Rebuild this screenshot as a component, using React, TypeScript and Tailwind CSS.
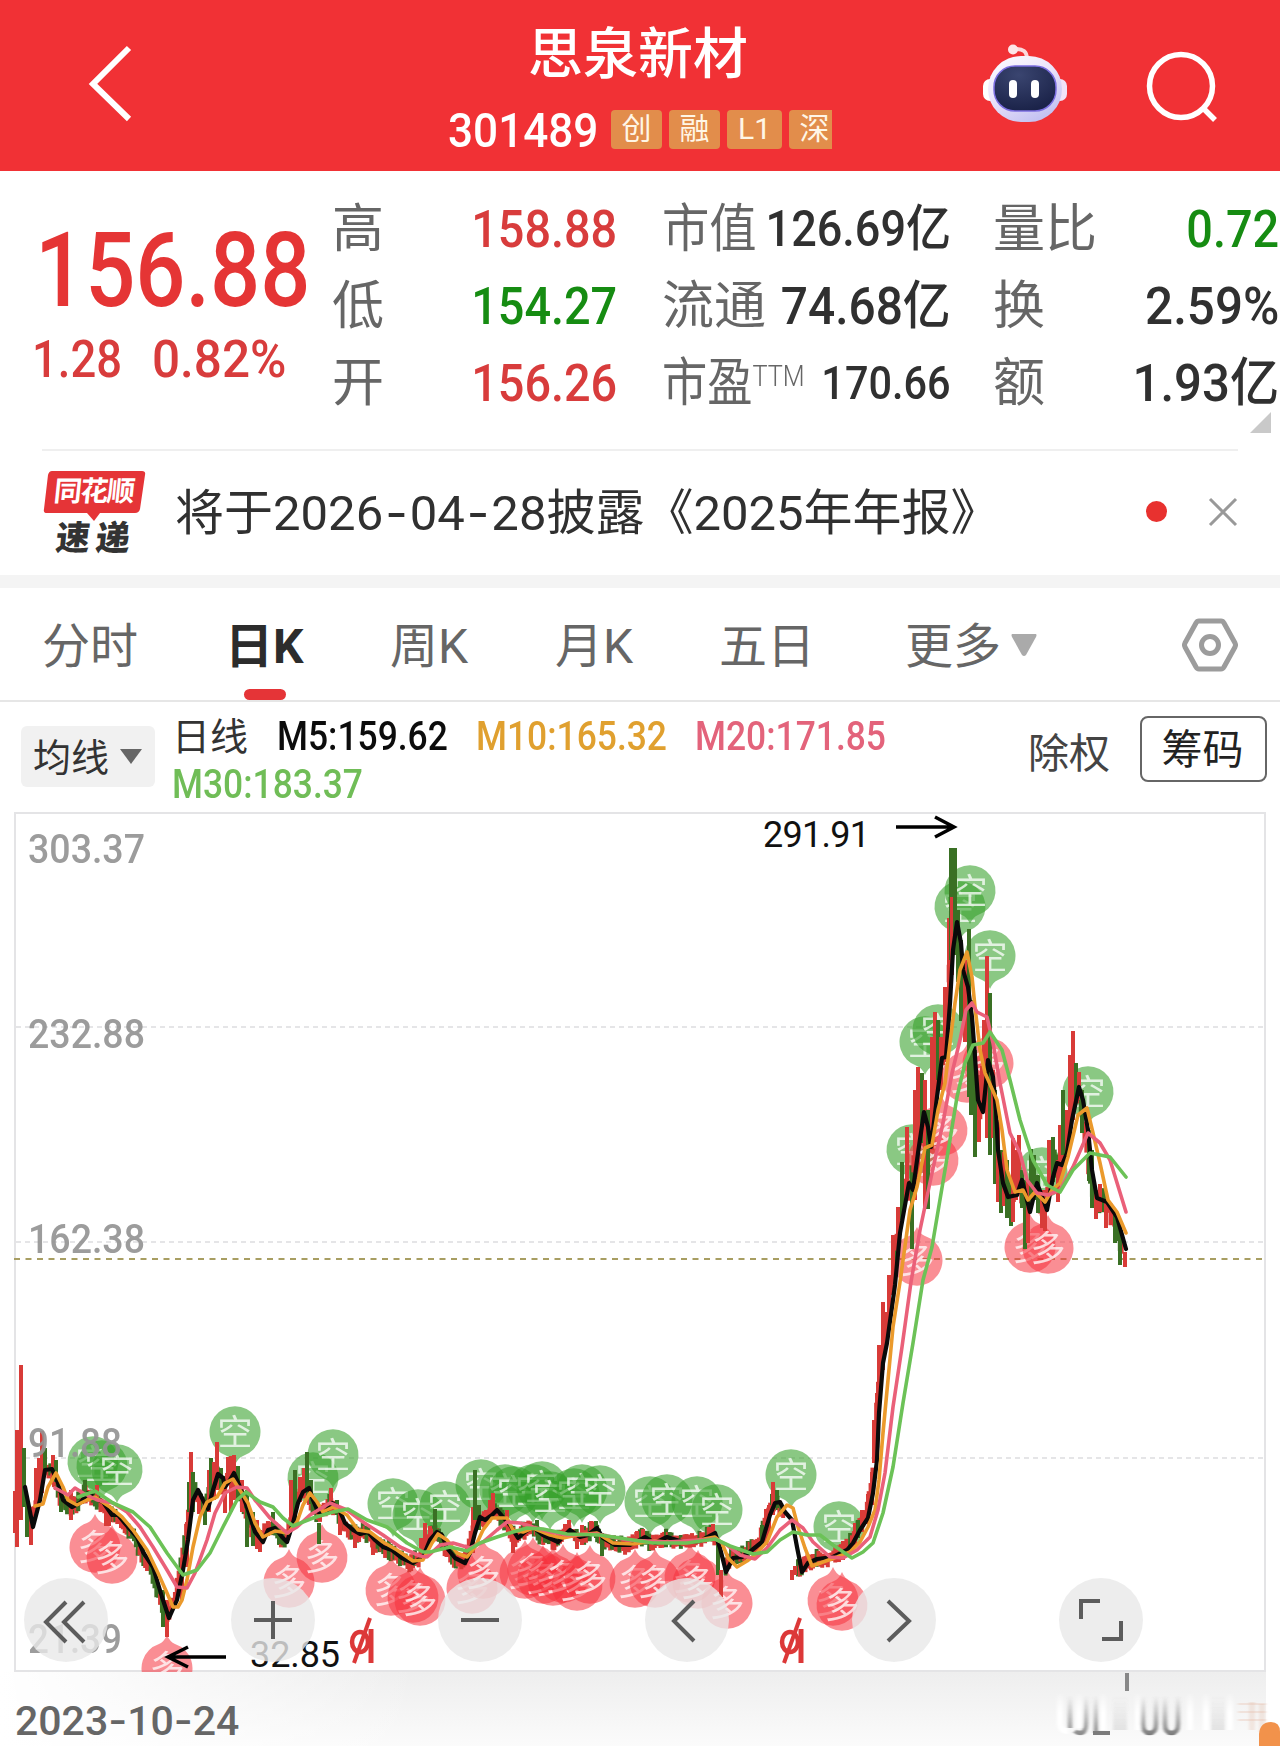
import React from 'react';
import { clsx } from 'clsx';

type Point = [number, number];
type Candle = [x: number, top: number, bottom: number, color: 'r' | 'g'];

const RED = '#d83b38';
const GREEN = '#3a7024';

const M5: Point[] = [
  [25, 1487], [33, 1527], [40, 1500], [45, 1470], [52, 1469], [58, 1483], [63, 1500], [72, 1507], [80, 1503], [88, 1493],
  [95, 1498], [103, 1502], [112, 1515], [118, 1515], [128, 1527], [137, 1537], [143, 1552], [153, 1567], [162, 1597],
  [169, 1618], [177, 1600], [183, 1570], [188, 1540], [193, 1500], [198, 1490], [203, 1500], [208, 1509], [213, 1490],
  [218, 1474], [223, 1478], [225, 1487], [230, 1480], [234, 1473], [240, 1487], [248, 1510], [255, 1532], [263, 1542],
  [268, 1530], [275, 1528], [282, 1537], [287, 1542], [293, 1523], [298, 1503], [303, 1492], [309, 1488], [313, 1500],
  [318, 1512], [325, 1513], [332, 1503], [338, 1507], [345, 1523], [353, 1530], [360, 1534], [368, 1532], [375, 1540],
  [383, 1547], [392, 1550], [402, 1558], [413, 1563], [423, 1557], [430, 1540], [437, 1532], [442, 1535], [447, 1548],
  [455, 1558], [465, 1563], [470, 1553], [475, 1533], [480, 1517], [485, 1520], [492, 1515], [497, 1510], [503, 1517],
  [510, 1525], [518, 1538], [525, 1532], [533, 1527], [543, 1535], [558, 1542], [570, 1530], [580, 1537], [588, 1535],
  [597, 1528], [603, 1538], [615, 1545], [630, 1545], [645, 1537], [655, 1543], [667, 1537], [683, 1542], [700, 1541],
  [715, 1533], [720, 1548], [726, 1572], [733, 1558], [742, 1557], [752, 1550], [762, 1542], [770, 1515], [775, 1503],
  [780, 1502], [785, 1512], [792, 1520], [797, 1547], [802, 1572], [808, 1563], [817, 1559], [833, 1557], [847, 1550],
  [853, 1543], [860, 1530], [868, 1518], [873, 1493], [877, 1460], [879, 1413], [883, 1363], [887, 1343], [892, 1307],
  [895, 1285], [900, 1233], [909, 1183], [913, 1190], [918, 1153], [924, 1112], [928, 1127], [931, 1147], [937, 1097],
  [942, 1058], [946, 1057], [950, 1003], [953, 950], [957, 922], [961, 943], [963, 970], [968, 987], [972, 1017],
  [975, 1057], [978, 1100], [983, 1112], [986, 1083], [988, 1060], [993, 1077], [996, 1110], [998, 1150], [1003, 1183],
  [1008, 1197], [1017, 1195], [1022, 1180], [1030, 1212], [1037, 1183], [1047, 1210], [1053, 1177], [1057, 1163],
  [1062, 1165], [1067, 1153], [1072, 1120], [1079, 1087], [1083, 1100], [1088, 1130], [1092, 1170], [1097, 1198],
  [1107, 1202], [1117, 1217], [1126, 1249],
];

const M10: Point[] = [
  [35, 1506], [43, 1504], [48, 1487], [56, 1473], [63, 1487], [68, 1500], [77, 1505], [87, 1500], [95, 1497], [110, 1507],
  [122, 1517], [133, 1530], [147, 1550], [158, 1573], [167, 1593], [173, 1607], [178, 1607], [182, 1600], [187, 1580],
  [193, 1547], [200, 1517], [207, 1502], [217, 1497], [225, 1483], [233, 1479], [238, 1487], [248, 1503], [255, 1523],
  [263, 1537], [275, 1531], [288, 1533], [297, 1522], [303, 1505], [310, 1493], [317, 1502], [323, 1512], [333, 1507],
  [347, 1515], [358, 1530], [370, 1532], [383, 1542], [397, 1550], [413, 1561], [423, 1560], [432, 1543], [438, 1534],
  [447, 1540], [457, 1553], [467, 1557], [475, 1547], [483, 1530], [492, 1518], [507, 1518], [513, 1530], [523, 1532],
  [533, 1528], [550, 1535], [563, 1538], [577, 1535], [597, 1533], [613, 1543], [633, 1544], [653, 1541], [683, 1543],
  [715, 1537], [722, 1543], [728, 1558], [737, 1567], [747, 1561], [755, 1555], [767, 1542], [777, 1517], [787, 1505],
  [793, 1508], [798, 1527], [805, 1548], [812, 1566], [823, 1562], [837, 1557], [850, 1552], [860, 1542], [868, 1527],
  [875, 1510], [879, 1480], [883, 1433], [888, 1380], [893, 1327], [900, 1282], [910, 1210], [917, 1187], [925, 1148],
  [932, 1145], [938, 1110], [945, 1083], [950, 1043], [955, 1003], [960, 970], [967, 952], [972, 977], [975, 1007],
  [980, 1050], [985, 1073], [997, 1100], [1002, 1130], [1007, 1170], [1015, 1192], [1023, 1190], [1028, 1200],
  [1035, 1192], [1045, 1202], [1052, 1190], [1060, 1183], [1068, 1157], [1078, 1115], [1087, 1108], [1093, 1133],
  [1100, 1163], [1108, 1200], [1117, 1212], [1126, 1233],
];

const M20: Point[] = [
  [55, 1488], [68, 1495], [75, 1488], [83, 1493], [97, 1500], [113, 1503], [127, 1512], [140, 1527], [153, 1547],
  [167, 1570], [177, 1587], [187, 1588], [195, 1573], [207, 1540], [215, 1513], [225, 1493], [237, 1487], [247, 1488],
  [255, 1500], [270, 1518], [287, 1533], [297, 1527], [310, 1515], [330, 1503], [347, 1510], [363, 1522], [383, 1535],
  [400, 1547], [420, 1556], [427, 1557], [440, 1545], [453, 1543], [470, 1548], [483, 1542], [497, 1530], [507, 1522],
  [520, 1523], [533, 1527], [550, 1532], [567, 1535], [597, 1534], [627, 1540], [667, 1542], [715, 1539], [727, 1545],
  [740, 1555], [755, 1559], [767, 1548], [780, 1530], [792, 1520], [803, 1528], [813, 1542], [830, 1557], [843, 1558],
  [857, 1550], [870, 1537], [878, 1510], [885, 1473], [893, 1407], [902, 1347], [911, 1282], [920, 1230], [932, 1173],
  [943, 1123], [952, 1073], [960, 1040], [966, 1010], [972, 1003], [977, 1012], [987, 1017], [993, 1043], [1000, 1083],
  [1010, 1133], [1020, 1153], [1027, 1180], [1037, 1193], [1048, 1195], [1060, 1190], [1073, 1167], [1088, 1133],
  [1100, 1143], [1110, 1160], [1126, 1212],
];

const M30: Point[] = [
  [78, 1497], [95, 1491], [113, 1503], [133, 1512], [150, 1527], [167, 1553], [183, 1575], [197, 1570], [210, 1553],
  [223, 1527], [237, 1500], [246, 1492], [260, 1502], [273, 1507], [283, 1518], [293, 1526], [313, 1518], [333, 1512],
  [348, 1509], [367, 1520], [387, 1527], [407, 1543], [423, 1552], [430, 1552], [450, 1547], [467, 1551], [480, 1543],
  [497, 1537], [513, 1532], [527, 1528], [543, 1529], [567, 1534], [600, 1535], [633, 1540], [653, 1543], [687, 1543],
  [715, 1539], [730, 1546], [753, 1554], [767, 1552], [780, 1540], [793, 1532], [807, 1535], [820, 1535], [833, 1545],
  [852, 1558], [863, 1552], [873, 1543], [883, 1513], [893, 1467], [903, 1403], [913, 1343], [923, 1280], [932, 1247],
  [945, 1170], [957, 1097], [965, 1063], [973, 1045], [983, 1043], [990, 1032], [1002, 1050], [1010, 1080], [1020, 1120],
  [1033, 1160], [1047, 1185], [1060, 1192], [1073, 1170], [1090, 1153], [1110, 1157], [1126, 1177],
];

// sessions with a range far outside their neighbours
const swings: Candle[] = [
  [15, 1491, 1533, 'r'], [17, 1430, 1547, 'r'], [21, 1365, 1520, 'r'], [24, 1448, 1507, 'g'], [27, 1500, 1537, 'g'],
  [31, 1507, 1545, 'r'], [36, 1468, 1507, 'r'], [39, 1458, 1500, 'r'], [42, 1431, 1493, 'r'], [45, 1448, 1472, 'g'],
  [53, 1455, 1478, 'r'], [56, 1460, 1482, 'g'], [61, 1490, 1512, 'g'], [71, 1490, 1520, 'r'], [85, 1480, 1502, 'g'],
  [97, 1485, 1500, 'r'], [106, 1505, 1526, 'r'], [109, 1505, 1526, 'r'], [163, 1590, 1627, 'g'], [167, 1600, 1637, 'r'],
  [182, 1558, 1600, 'r'], [187, 1522, 1567, 'r'], [189, 1482, 1512, 'g'], [191, 1452, 1512, 'r'], [193, 1472, 1512, 'g'],
  [199, 1492, 1514, 'r'], [205, 1500, 1525, 'g'], [209, 1470, 1512, 'r'], [211, 1458, 1500, 'g'], [214, 1462, 1500, 'r'],
  [217, 1442, 1490, 'r'], [221, 1468, 1490, 'g'], [225, 1480, 1513, 'r'], [228, 1457, 1482, 'r'], [231, 1456, 1512, 'r'],
  [234, 1455, 1500, 'r'], [238, 1466, 1500, 'g'], [242, 1480, 1512, 'r'], [247, 1490, 1547, 'g'], [253, 1512, 1546, 'g'],
  [257, 1520, 1549, 'r'], [260, 1530, 1552, 'r'], [273, 1512, 1535, 'g'], [279, 1525, 1544, 'g'], [291, 1480, 1530, 'r'],
  [295, 1470, 1523, 'g'], [300, 1477, 1502, 'r'], [304, 1468, 1497, 'r'], [307, 1452, 1490, 'g'], [311, 1480, 1504, 'g'],
  [319, 1523, 1544, 'g'], [331, 1488, 1512, 'r'], [337, 1500, 1515, 'g'], [340, 1510, 1535, 'r'], [355, 1530, 1548, 'r'],
  [373, 1540, 1555, 'r'], [421, 1538, 1556, 'r'], [425, 1523, 1550, 'r'], [430, 1526, 1545, 'r'], [435, 1509, 1533, 'g'],
  [473, 1507, 1553, 'r'], [475, 1470, 1520, 'g'], [479, 1505, 1530, 'g'], [486, 1510, 1525, 'r'], [490, 1500, 1520, 'r'],
  [493, 1493, 1517, 'r'], [507, 1510, 1525, 'r'], [513, 1527, 1553, 'r'], [537, 1520, 1535, 'g'], [565, 1524, 1536, 'r'],
  [569, 1520, 1535, 'r'], [577, 1532, 1549, 'r'], [582, 1525, 1545, 'r'], [591, 1521, 1535, 'r'], [596, 1521, 1538, 'g'],
  [602, 1533, 1556, 'g'], [637, 1531, 1545, 'r'], [643, 1529, 1540, 'r'], [709, 1527, 1540, 'r'], [713, 1524, 1541, 'r'],
  [718, 1542, 1575, 'g'], [721, 1570, 1597, 'r'], [762, 1525, 1548, 'g'], [766, 1509, 1545, 'r'], [769, 1505, 1535, 'r'],
  [773, 1482, 1515, 'r'], [777, 1490, 1508, 'g'], [792, 1570, 1580, 'r'], [795, 1566, 1575, 'r'], [843, 1541, 1560, 'r'],
  [855, 1523, 1545, 'r'], [858, 1520, 1538, 'g'], [862, 1510, 1532, 'r'], [868, 1494, 1524, 'r'], [872, 1472, 1505, 'r'],
  [874, 1420, 1463, 'r'], [877, 1393, 1445, 'r'], [879, 1345, 1415, 'r'], [883, 1302, 1370, 'r'], [886, 1312, 1345, 'r'],
  [889, 1275, 1325, 'r'], [893, 1235, 1295, 'r'], [898, 1207, 1255, 'r'], [902, 1162, 1220, 'g'], [907, 1127, 1190, 'r'],
  [912, 1173, 1249, 'g'], [915, 1090, 1200, 'r'], [918, 1067, 1177, 'r'], [922, 1073, 1143, 'g'], [925, 1080, 1207, 'r'],
  [928, 1110, 1209, 'g'], [932, 1037, 1150, 'r'], [935, 1012, 1110, 'r'], [938, 1020, 1080, 'g'], [941, 1037, 1090, 'r'],
  [945, 987, 1062, 'r'], [949, 918, 1020, 'r'], [951, 848, 960, 'g'], [952, 897, 975, 'r'], [955, 848, 955, 'g'],
  [958, 910, 982, 'g'], [961, 940, 1021, 'g'], [965, 960, 1042, 'r'], [968, 960, 1022, 'r'], [969, 929, 1097, 'g'],
  [971, 1000, 1115, 'g'], [975, 1050, 1157, 'g'], [979, 1075, 1142, 'r'], [982, 1066, 1110, 'r'], [984, 1020, 1090, 'r'],
  [987, 956, 1138, 'r'], [990, 993, 1155, 'g'], [993, 1070, 1138, 'r'], [995, 1090, 1184, 'g'], [998, 1120, 1202, 'r'],
  [1001, 1150, 1213, 'g'], [1004, 1152, 1206, 'r'], [1007, 1160, 1218, 'g'], [1011, 1180, 1226, 'g'],
  [1013, 1138, 1222, 'r'], [1016, 1150, 1200, 'r'], [1019, 1135, 1192, 'r'], [1022, 1170, 1208, 'g'],
  [1025, 1180, 1249, 'g'], [1028, 1180, 1243, 'r'], [1031, 1149, 1205, 'g'], [1034, 1155, 1200, 'g'],
  [1038, 1175, 1213, 'g'], [1042, 1190, 1228, 'r'], [1045, 1190, 1231, 'r'], [1049, 1140, 1195, 'r'],
  [1053, 1137, 1182, 'g'], [1058, 1160, 1202, 'r'], [1060, 1125, 1180, 'r'], [1063, 1090, 1155, 'g'],
  [1067, 1110, 1160, 'r'], [1070, 1055, 1140, 'r'], [1073, 1031, 1120, 'r'], [1076, 1063, 1102, 'g'],
  [1079, 1072, 1100, 'r'], [1082, 1090, 1133, 'g'], [1089, 1130, 1181, 'g'], [1092, 1150, 1208, 'g'],
  [1096, 1190, 1219, 'r'], [1100, 1184, 1212, 'r'], [1106, 1200, 1228, 'r'], [1111, 1205, 1225, 'r'],
  [1115, 1210, 1243, 'g'], [1120, 1225, 1265, 'g'], [1125, 1252, 1267, 'r'],
];

const shortSignals: Point[] = [
  [93, 1462], [102, 1466], [117, 1470], [235, 1432], [313, 1478], [333, 1455], [393, 1504], [418, 1515], [445, 1507],
  [481, 1485], [505, 1490], [514, 1492], [533, 1490], [542, 1487], [550, 1497], [574, 1494], [582, 1490], [600, 1491],
  [650, 1502], [667, 1500], [697, 1502], [717, 1510], [791, 1475], [839, 1527], [960, 907], [970, 891], [990, 956],
  [925, 1042], [938, 1030], [912, 1150], [1088, 1092], [1042, 1173],
];

const longSignals: Point[] = [
  [95, 1547], [112, 1558], [167, 1668], [289, 1582], [322, 1557], [391, 1590], [413, 1597], [420, 1600], [472, 1588],
  [483, 1573], [525, 1573], [533, 1570], [543, 1578], [553, 1580], [563, 1577], [577, 1585], [590, 1578], [635, 1582],
  [655, 1582], [690, 1577], [698, 1583], [727, 1603], [833, 1600], [842, 1605], [917, 1260], [933, 1160], [942, 1130],
  [967, 1077], [988, 1063], [1030, 1247], [1048, 1248],
];

function valueAt(line: Point[], x: number) {
  const i = line.findIndex(([px]) => px >= x);
  if (i === -1) return line[line.length - 1][1];
  if (i === 0) return line[0][1];
  const [x0, y0] = line[i - 1];
  const [x1, y1] = line[i];
  return y0 + ((y1 - y0) * (x - x0)) / (x1 - x0);
}

// the ordinary sessions hug the 5 day average, which trails them by a few pixels
const sessions: Candle[] = [];
for (let i = 0; i < 590; i++) {
  const x = 28 + i * 1.86;
  if (x > 1122) break;
  if (x > 716 && x < 724) continue;
  if (x > 784 && x < 798) continue;
  const y = valueAt(M5, x + 3);
  const noise = Math.abs(Math.sin(i * 12.9898) * 43758.5453) % 1;
  const other = Math.abs(Math.sin(i * 78.233) * 12543.123) % 1;
  const reach = x > 895 ? 12 : 7;
  const rising = valueAt(M5, x + 5) < valueAt(M5, x);
  sessions.push([x, y - 3 - noise * reach, y + 3 + other * reach, (rising ? noise < 0.8 : noise < 0.5) ? 'r' : 'g']);
}

const toPath = (line: Point[]) => 'M' + line.map((p) => p.join(' ')).join('L');

function Candles({ items }: { items: Candle[] }) {
  return (
    <>
      {items.map(([x, top, bottom, color], i) => (
        <rect key={i} x={x - 2} y={top} width={4} height={bottom - top} fill={color === 'r' ? RED : GREEN} />
      ))}
    </>
  );
}

function Signal({ at: [x, y], long }: { at: Point; long?: boolean }) {
  return (
    <g transform={`translate(${x} ${y})`}>
      <path
        d="M-8 24A25.5 25.5 0 1 1 8 24Q3 26 0 33Q-3 26 -8 24Z"
        transform={long ? 'rotate(180)' : undefined}
        fill={long ? '#f6323c' : '#36a02a'}
        opacity={long ? 0.55 : 0.58}
      />
      <text y={13} fontSize={35} textAnchor="middle" fill="#fff" opacity={0.75} fontFamily="'Noto Sans CJK SC', sans-serif">
        {long ? '多' : '空'}
      </text>
    </g>
  );
}

function Dividend({ x }: { x: number }) {
  return (
    <g transform={`translate(${x} 1642)`} fill="none" stroke="#dc3838">
      <ellipse rx={8} ry={10} strokeWidth={4.5} />
      <path d="M11 -13V21" strokeWidth={5} />
      <path d="M10 -24L-6 21" strokeWidth={4} />
    </g>
  );
}

const scale = [
  { label: '303.37', y: 863, width: 117 },
  { label: '232.88', y: 1048, width: 117 },
  { label: '162.38', y: 1253, width: 117 },
  { label: '91.88', y: 1457, width: 94 },
  { label: '21.39', y: 1653, width: 94 },
];

function KlineChart() {
  return (
    <svg viewBox="0 812 1280 860" className="block h-[860px] w-[1280px]" fontFamily="Roboto, sans-serif">
      <rect x={15} y={813} width={1250} height={858} fill="#fff" stroke="#e4e4e6" strokeWidth={2} />
      <g stroke="#dddde0" strokeWidth={1.5} strokeDasharray="5 4">
        <path d="M16 1027H1265M16 1242H1265M16 1458H1265" />
      </g>
      <path d="M14 1259H1266" stroke="#a89e62" strokeWidth={2} strokeDasharray="6 5.5" />

      {shortSignals.map((p, i) => <Signal key={i} at={p} />)}
      {longSignals.map((p, i) => <Signal key={i} at={p} long />)}

      <Candles items={sessions} />
      <Candles items={swings} />

      <g fill="none" strokeWidth={3.6} strokeLinejoin="round" strokeLinecap="round">
        <path d={toPath(M5)} stroke="#0a0a0a" strokeWidth={4.2} />
        <path d={toPath(M10)} stroke="#eb9a2c" />
        <path d={toPath(M20)} stroke="#ea6079" />
        <path d={toPath(M30)} stroke="#6cc257" />
      </g>

      {scale.map(({ label, y, width }) => (
        <text key={label} x={28} y={y} fontSize={40} fontWeight={500} fill="#949494" opacity={0.92} textLength={width} lengthAdjust="spacingAndGlyphs">
          {label}
        </text>
      ))}

      <text x={763} y={847} fontSize={36} textLength={107} fill="#111">291.91</text>
      <text x={250} y={1667} fontSize={36} textLength={90} fill="#111">32.85</text>
      <g fill="none" stroke="#000" strokeWidth={3.5}>
        <path d="M896 827H954M935 817L954 827L935 837" />
        <path d="M226 1657H168M188 1647L168 1657L188 1667" />
      </g>

      <Dividend x={360} />
      <Dividend x={790} />
    </svg>
  );
}

const controls = [
  'M42 24L22 44L42 64M60 24L40 44L60 64',
  'M42 23V61M23 42H61',
  'M23 42H61',
  'M49 23L29 43L49 63',
  'M36 23L57 43L36 63',
  'M22 41V23H41M43 61H62V43',
];

function Robot() {
  return (
    <svg viewBox="0 0 86 80" className="h-[80px] w-[86px]">
      <defs>
        <linearGradient id="shell" x1="0" y1="0" x2="0.6" y2="1">
          <stop offset="0" stopColor="#fff" />
          <stop offset="0.55" stopColor="#e9e2fa" />
          <stop offset="1" stopColor="#c4c2f2" />
        </linearGradient>
        <radialGradient id="visor" cx="0.4" cy="0.2" r="0.8">
          <stop offset="0" stopColor="#3a4570" />
          <stop offset="1" stopColor="#1b2349" />
        </radialGradient>
      </defs>
      <path d="M33 5Q45 4 45 15" fill="none" stroke="#fbd9dc" strokeWidth={4} />
      <circle cx={31} cy={5.5} r={5} fill="#fde6e8" />
      <rect x={1} y={35} width={14} height={22} rx={7} fill="#fff" />
      <rect x={71} y={35} width={14} height={22} rx={7} fill="#f1e3f8" />
      <rect x={6} y={12} width={74} height={66} rx={33} fill="url(#shell)" />
      <rect x={12} y={22} width={62} height={45} rx={21} fill="url(#visor)" stroke="#7b6ee0" strokeWidth={1.5} />
      <rect x={27} y={36} width={8} height={18} rx={4} fill="#fff" />
      <rect x={49} y={36} width={8} height={18} rx={4} fill="#fff" />
    </svg>
  );
}

function Badge({ className, children }: { className?: string; children: React.ReactNode }) {
  return (
    <span className={clsx('shrink-0 rounded-[4px] bg-[#e28d4b] text-center text-[#fff6e6]', className)}>{children}</span>
  );
}

function Header() {
  return (
    <header className="flex h-[171px] bg-[#f13135] text-white">
      <svg viewBox="0 0 440 170" className="h-[170px] w-[440px] shrink-0">
        <path d="M129 48L93 84L129 119" fill="none" stroke="#fff" strokeWidth={6} />
      </svg>
      <div className="flex w-[400px] shrink-0 flex-col">
        <h1 className="mt-[25px] h-[58px] pr-[4px] text-center text-[55px] leading-[58px] font-medium">思泉新材</h1>
        <div className="mt-[23px] ml-[8px] flex h-[46px] items-center">
          <span className="w-[163px] shrink-0">
            <span className="mt-[3px] inline-block origin-left scale-x-[0.9] text-[49px] leading-[46px] font-medium">301489</span>
          </span>
          <div className="flex h-[39px] w-[221px] gap-[7px] overflow-hidden text-[30px] leading-[37px]">
            <Badge className="w-[51px]">创</Badge>
            <Badge className="w-[51px]">融</Badge>
            <Badge className="w-[55px]">L1</Badge>
            <Badge className="w-[51px]">深</Badge>
          </div>
        </div>
      </div>
      <div className="ml-[142px] flex w-[86px] shrink-0 pt-[44px]">
        <Robot />
      </div>
      <svg viewBox="0 0 80 80" className="mt-[44px] ml-[72px] h-[80px] w-[80px] shrink-0">
        <circle cx={41} cy={42} r={31.5} fill="none" stroke="#fff" strokeWidth={5.5} />
        <path d="M62 63L75 76" stroke="#fff" strokeWidth={5.5} />
      </svg>
    </header>
  );
}

interface StatProps {
  label: React.ReactNode;
  value: string;
  labelClass?: string;
  valueClass?: string;
}

function Stat({ label, value, labelClass, valueClass = 'scale-x-[0.9] text-[52px] text-[#303030]' }: StatProps) {
  return (
    <div className="flex h-[77px] items-center justify-between whitespace-nowrap">
      <span className={clsx('w-0 origin-left text-[52px] leading-[77px] text-[#666]', labelClass)}>{label}</span>
      <span className={clsx('origin-right leading-[77px] font-medium', valueClass)}>{value}</span>
    </div>
  );
}

function Quote() {
  return (
    <section className="flex h-[278px] pt-[20px]">
      <div className="w-[332px] shrink-0 text-[#e53535]">
        <div className="mt-[30px] ml-[35px] h-[100px] origin-left scale-x-[0.857] text-[103px] leading-[100px] font-medium">
          156.88
        </div>
        <div className="mt-[9px] ml-[32px] flex h-[60px] text-[51px] leading-[60px] text-[#d83c3c]">
          <span className="w-[120px] origin-left scale-x-[0.89] font-medium">1.28</span>
          <span className="origin-left scale-x-[0.97] font-medium">0.82%</span>
        </div>
      </div>
      <div className="w-[285px] shrink-0">
        <Stat label="高" value="158.88" valueClass="scale-x-[0.9] text-[52px] text-[#d83c3c]" />
        <Stat label="低" value="154.27" valueClass="scale-x-[0.9] text-[52px] text-[#168c12]" />
        <Stat label="开" value="156.26" valueClass="scale-x-[0.9] text-[52px] text-[#d83c3c]" />
      </div>
      <div className="ml-[45px] w-[289px] shrink-0">
        <Stat label="市值" value="126.69亿" labelClass="scale-x-[0.91]" valueClass="scale-x-[0.9] text-[50px] text-[#303030]" />
        <Stat label="流通" value="74.68亿" valueClass="scale-x-[0.92] text-[52px] text-[#303030]" />
        <Stat
          label={<>市盈<sup className="top-[-15px] text-[29px] font-light">TTM</sup></>}
          value="170.66"
          labelClass="scale-x-[0.87]"
          valueClass="scale-x-[0.9] text-[46px] text-[#303030]"
        />
      </div>
      <div className="ml-[42px] w-[286px] shrink-0">
        <Stat label="量比" value="0.72" valueClass="scale-x-[0.9] text-[52px] text-[#168c12]" />
        <Stat label="换" value="2.59%" valueClass="scale-x-[0.95] text-[52px] text-[#303030]" />
        <Stat label="额" value="1.93亿" valueClass="scale-x-[0.945] text-[52px] text-[#303030]" />
        <svg viewBox="0 0 21 21" className="-mt-[10px] ml-[257px] h-[21px] w-[21px]">
          <path d="M21 0V21H0Z" fill="#c9c9c9" />
        </svg>
      </div>
    </section>
  );
}

// Roboto's hyphen is too short next to tabular dates
function DateText({ value, hyphenClass }: { value: string; hyphenClass?: string }) {
  return (
    <>
      {value.split('-').map((part, i) => (
        <React.Fragment key={i}>
          {i > 0 && <span className={clsx("font-['Inter']", hyphenClass)}>-</span>}
          {part}
        </React.Fragment>
      ))}
    </>
  );
}

function Notice() {
  return (
    <section className="mx-[42px] flex h-[126px] items-center border-t-2 border-[#efefef]">
      <div className="relative h-[84px] w-[104px] shrink-0">
        <svg viewBox="0 0 104 84" className="h-[84px] w-[104px]">
          <path d="M10 0H100Q104 0 103 4L98 38Q97 42 93 42H58L52 50L45 42H5Q1 42 2 38L6 4Q7 0 10 0Z" fill="#e53437" />
        </svg>
        <span className="absolute top-[3px] left-[12px] -skew-x-6 text-[28px] leading-[36px] font-bold tracking-[-1.5px] text-white">
          同花顺
        </span>
        <span className="absolute top-[51px] left-[14px] -skew-x-6 text-[34px] leading-[33px] font-black tracking-[6px] text-[#333]">
          速递
        </span>
      </div>
      <p className="ml-[29px] w-[973px] text-[49px] leading-[60px] whitespace-nowrap text-[#303030]">
        将于<DateText value="2026-04-28" hyphenClass="px-[2px]" />披露《2025年年报》
      </p>
      <span className="mb-[3px] h-[21px] w-[21px] shrink-0 rounded-full bg-[#e8312f]" />
      <svg viewBox="0 0 30 30" className="mb-[2px] ml-[41px] h-[30px] w-[30px] shrink-0">
        <path d="M2 2L28 28M28 2L2 28" stroke="#999" strokeWidth={3} />
      </svg>
    </section>
  );
}

const tabs = [
  { label: '分时', width: 'w-[183px]' },
  { label: '日K', width: 'w-[165px]', active: true },
  { label: '周K', width: 'w-[165px]' },
  { label: '月K', width: 'w-[164px]' },
  { label: '五日', width: 'w-[186px]' },
];

function Tabs() {
  return (
    <nav className="flex h-[114px] border-b-2 border-[#e6e6e6] pl-[42px] text-[48px] leading-[117px] text-[#666]">
      {tabs.map(({ label, width, active }) => (
        <div key={label} className={clsx('relative h-[112px] shrink-0', width, active && 'font-bold text-[#2c2c2c]')}>
          {label}
          {active && <span className="absolute bottom-0 left-[19px] h-[11px] w-[42px] rounded-full bg-[#e53437]" />}
        </div>
      ))}
      <div className="flex w-[277px] shrink-0">
        更多
        <svg viewBox="0 0 26 22" className="mt-[46px] ml-[10px] h-[22px] w-[26px]">
          <path d="M1 0H25Q26 1 25 3L15 21Q13 23 11 21L1 3Q0 1 1 0Z" fill="#aaa" />
        </svg>
      </div>
      <svg viewBox="0 0 56 54" className="mt-[30px] h-[54px] w-[56px]">
        <path d="M17 3H39Q41 3 42 5L53 25Q54 27 53 29L42 49Q41 51 39 51H17Q15 51 14 49L3 29Q2 27 3 25L14 5Q15 3 17 3Z" fill="none" stroke="#9c9c9c" strokeWidth={5} />
        <circle cx={28} cy={27} r={8.5} fill="none" stroke="#9c9c9c" strokeWidth={5} />
      </svg>
    </nav>
  );
}

function Average({ className, children }: { className: string; children: React.ReactNode }) {
  return (
    <span className={clsx('shrink-0 whitespace-nowrap', className)}>
      <span className="inline-block origin-left scale-x-[0.885] font-medium">{children}</span>
    </span>
  );
}

function Legend() {
  return (
    <section className="flex h-[110px] pl-[21px]">
      <button className="mt-[24px] flex h-[61px] w-[134px] shrink-0 items-center rounded-[6px] bg-[#f1f1f1] pl-[12px] text-[38px] text-[#333]">
        <span className="mt-[3px]">均线</span>
        <svg viewBox="0 0 22 15" className="ml-[11px] h-[15px] w-[22px]">
          <path d="M0 0H22L11 15Z" fill="#666" />
        </svg>
      </button>
      <div className="ml-[17px] w-[858px] shrink-0 pt-[11px] text-[40px] leading-[48px]">
        <div className="flex">
          <span className="w-[105px] text-[38px] text-[#333]">日线</span>
          <Average className="w-[199px] text-[#0c0c0c]">M5:159.62</Average>
          <Average className="w-[219px] text-[#e0a02f]">M10:165.32</Average>
          <Average className="w-[219px] text-[#e3637b]">M20:171.85</Average>
        </div>
        <Average className="text-[#70bd57]">M30:183.37</Average>
      </div>
      <span className="mt-[22px] w-[110px] shrink-0 text-[41px] leading-[60px] text-[#444]">
        <span className="-ml-[2px]">除权</span>
      </span>
      <button className="mt-[14px] flex h-[66px] w-[127px] shrink-0 items-center justify-center rounded-[8px] border-2 border-[#666] pt-[4px] pr-[2px] text-[41px] text-[#222]">
        筹码
      </button>
    </section>
  );
}

function TimeAxis() {
  return (
    <footer className="flex h-[74px] justify-between bg-linear-to-b from-[#eeeeee] to-[#fbfbfb]">
      <div className="w-[420px] bg-linear-to-r from-white to-transparent pt-[23px] pl-[15px] text-[41px] leading-[50px] font-medium text-[#666]">
        <DateText value="2023-10-24" />
      </div>
      <svg viewBox="1040 1672 240 74" className="h-[74px] w-[240px]">
        <defs>
          <linearGradient id="smear" x1="0" y1="1696" x2="0" y2="1735" gradientUnits="userSpaceOnUse">
            <stop offset="0" stopColor="#777" stopOpacity={0} />
            <stop offset="1" stopColor="#6c6c6c" />
          </linearGradient>
          <linearGradient id="ghost" x1="0" y1="1692" x2="0" y2="1732" gradientUnits="userSpaceOnUse">
            <stop offset="0" stopColor="#fff" stopOpacity={0} />
            <stop offset="0.5" stopColor="#fff" />
          </linearGradient>
          <filter id="soft" x="-10%" y="-10%" width="120%" height="120%">
            <feGaussianBlur stdDeviation="1.6 0.6" />
          </filter>
        </defs>
        <rect x={1266} y={1672} width={14} height={74} fill="#fff" />
        <path d="M1127 1673V1691" stroke="#888" strokeWidth={4} />
        <g fill="none" filter="url(#soft)">
          <path d="M1060 1694V1722Q1060 1731 1068 1731M1079 1694V1728M1103 1694V1730M1138 1694V1730M1190 1694V1730M1206 1694V1730M1230 1694V1730" stroke="url(#ghost)" strokeWidth={6} />
          <path d="M1070 1694V1728M1086 1694V1722Q1086 1733 1080 1733Q1077 1733 1075 1731M1096 1694V1733" stroke="url(#smear)" strokeWidth={4.5} opacity={0.8} />
          <path d="M1143 1694V1724Q1143 1733 1149.500 1733Q1156 1733 1156 1724V1694M1165 1694V1724Q1165 1733 1171.500 1733Q1178 1733 1178 1724V1694" stroke="url(#smear)" strokeWidth={4.5} opacity={0.9} />
          <path d="M1120 1694V1730M1218 1694V1730" stroke="url(#smear)" strokeWidth={14} opacity={0.18} />
          <path d="M1238 1704H1266M1238 1712H1266M1238 1720H1266" stroke="#e9c6b4" strokeWidth={2} opacity={0.4} />
          <path d="M1252 1702V1730M1262 1704V1732" stroke="#e2b8a4" strokeWidth={6} opacity={0.3} />
        </g>
        <path d="M1093 1733H1110" stroke="#7b7b7b" strokeWidth={4} />
        <path d="M1259 1746V1734Q1260 1722 1271 1722Q1280 1722 1280 1732V1746Z" fill="#f2924b" />
      </svg>
    </footer>
  );
}

export default function App() {
  return (
    <div className="h-[1746px] w-[1280px] overflow-hidden bg-white font-['Roboto','Noto_Sans_CJK_SC',sans-serif]">
      <Header />
      <Quote />
      <Notice />
      <div className="h-[13px] bg-[#f4f4f4]" />
      <Tabs />
      <Legend />
      <main className="relative">
        <KlineChart />
        <div className="absolute top-[766px] left-[24px] flex gap-[123px]">
          {controls.map((d) => (
            <button key={d} className="h-[84px] w-[84px] rounded-full bg-[#e8e8e8]/80">
              <svg viewBox="0 0 84 84" className="h-[84px] w-[84px]">
                <path d={d} fill="none" stroke="#5c5c5c" strokeWidth={4} />
              </svg>
            </button>
          ))}
        </div>
      </main>
      <TimeAxis />
    </div>
  );
}
